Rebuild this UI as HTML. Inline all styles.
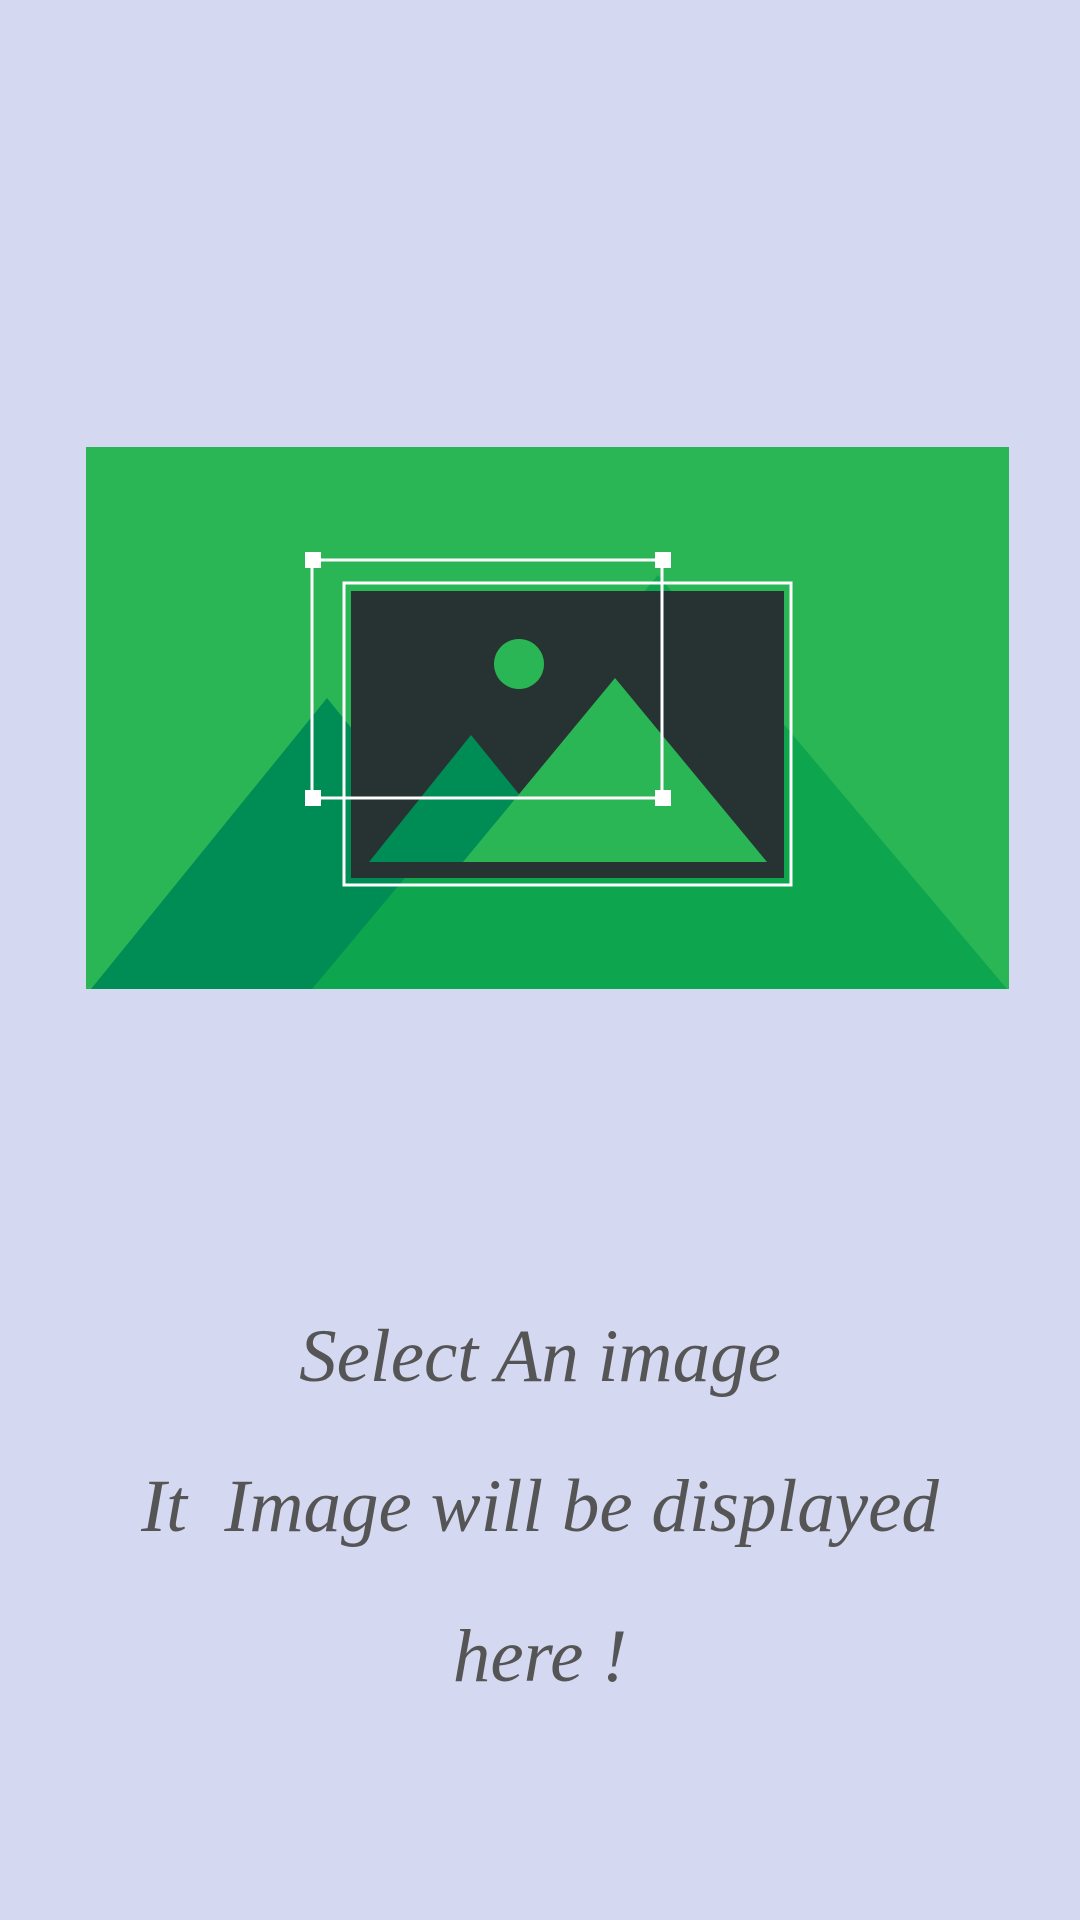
<!DOCTYPE html>
<html><head><style>
html,body{margin:0;padding:0;width:1080px;height:1920px;background:#d4d8f1;overflow:hidden;}
svg{position:absolute;left:0;top:0;}
.t{position:absolute;left:0;width:1080px;text-align:center;font-family:"Liberation Serif",serif;font-style:italic;color:#555555;font-size:75px;white-space:pre;}
</style></head><body>
<svg width="1080" height="1920">
<rect x="86" y="447" width="923" height="542" fill="#2bb656"/>
<polygon points="91,989 327,698 563,989" fill="#008c55"/>
<polygon points="312,989 658,575 1007,989" fill="#0ea54f"/>
<rect x="344" y="583" width="447" height="302" fill="none" stroke="#fff" stroke-width="3"/>
<rect x="351" y="591" width="433" height="287" fill="#273333"/>
<circle cx="519" cy="664" r="25" fill="#2bb656"/>
<polygon points="369,862 471,735 574,862" fill="#008c55"/>
<polygon points="463,862 615,678 767,862" fill="#2bb656"/>
<rect x="312" y="560" width="350" height="238" fill="none" stroke="#fff" stroke-width="3"/>
<rect x="305" y="552" width="16" height="16" fill="#fff"/>
<rect x="655" y="552" width="16" height="16" fill="#fff"/>
<rect x="305" y="790" width="16" height="16" fill="#fff"/>
<rect x="655" y="790" width="16" height="16" fill="#fff"/>
</svg>
<div class="t" style="top:1314px">Select An image</div>
<div class="t" style="top:1464px">It  Image will be displayed</div>
<div class="t" style="top:1614px">here !</div>
</body></html>
